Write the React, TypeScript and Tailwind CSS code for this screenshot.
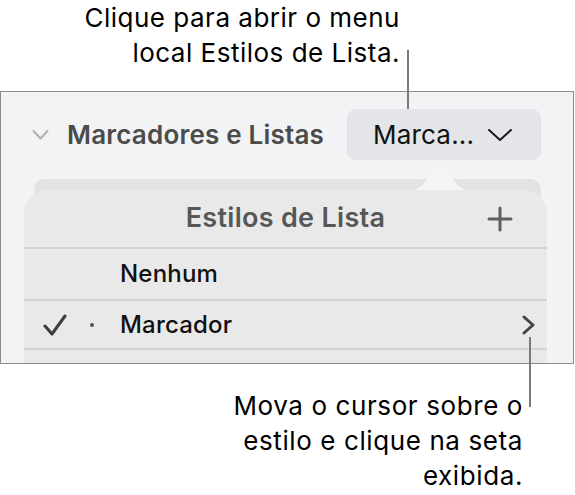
export default function App() {
  return (
    <div className="relative h-[495px] w-[575px] overflow-hidden bg-white font-['Inter',sans-serif] text-black">
      {/* top callout */}
      <div className="h-[91px] pr-[175px] text-right text-[26px] leading-[35px] tracking-[0.5px]">
        <p>Clique para abrir o menu</p>
        <p>local Estilos de Lista.</p>
      </div>

      {/* screenshot frame */}
      <div className="h-[273px] w-[574px] overflow-hidden border border-[#8c8c8c] bg-[#f2f3f5]">
        <div className="flex items-center pt-[17px] pl-[31px]">
          <svg width="17" height="12" viewBox="0 0 17 12" className="shrink-0">
            <polyline points="1.5,2 8.5,9.5 15.5,2" fill="none" stroke="#b0b0b0" strokeWidth="2" strokeLinecap="round" strokeLinejoin="round" />
          </svg>
          <span className="ml-[18px] text-[26px] font-semibold tracking-[0.2px] text-[#4b4b4b]">Marcadores e Listas</span>
          <div className="ml-auto mr-[32px] flex h-[51px] w-[194px] items-center rounded-[9px] bg-[#e4e5e8] pl-[26px]">
            <span className="text-[26px] tracking-[0.2px] text-[#111]">Marca...</span>
            <svg width="26" height="14" viewBox="0 0 26 14" className="ml-[13px] shrink-0">
              <polyline points="2,2 13,12 24,2" fill="none" stroke="#1a1a1a" strokeWidth="2" strokeLinecap="round" strokeLinejoin="round" />
            </svg>
          </div>
        </div>

        {/* popover stack */}
        <div className="relative mt-[19px] ml-[33px] w-[507px] rounded-t-[10px] bg-[#e2e3e5] pt-[11px]">
          <svg width="56" height="24" viewBox="0 0 56 24" className="absolute left-[378px] top-[-13px]">
            <path d="M0,24 C12,24 20,2 28,2 C36,2 44,24 56,24 Z" fill="#f5f5f5" />
          </svg>
          <div className="relative -ml-[10px] w-[523px] rounded-t-[24px] bg-[#e9e9e9]">
            <div className="grid h-[59px] grid-cols-[1fr_auto_1fr] items-center border-b-2 border-[#d3d3d3]">
              <span />
              <span className="text-[27px] font-semibold tracking-[0.3px] text-[#575757]">Estilos de Lista</span>
              <svg width="26" height="26" viewBox="0 0 26 26" className="mr-[34px] justify-self-end">
                <path d="M13,2 V24 M2,13 H24" stroke="#5f5f5f" strokeWidth="3" strokeLinecap="round" />
              </svg>
            </div>
            <div className="flex h-[52px] items-center border-b-2 border-[#d3d3d3] pl-[96px]">
              <span className="text-[24px] font-medium tracking-[0.2px] text-[#111]">Nenhum</span>
            </div>
            <div className="flex h-[49px] items-center border-b-2 border-[#d3d3d3] pl-[19px] pr-[11px]">
              <svg width="24" height="22" viewBox="0 0 24 22" className="shrink-0">
                <polyline points="2,12 9,20 22,2" fill="none" stroke="#3d3d3d" strokeWidth="3" strokeLinecap="round" strokeLinejoin="round" />
              </svg>
              <span className="ml-[23px] h-[4px] w-[4px] rounded-full bg-[#555]" />
              <span className="ml-[26px] text-[24px] font-medium tracking-[0.2px] text-[#111]">Marcador</span>
              <svg width="14" height="20" viewBox="0 0 14 20" className="ml-auto shrink-0">
                <polyline points="2,2 11,10 2,18" fill="none" stroke="#444" strokeWidth="3" strokeLinecap="round" strokeLinejoin="round" />
              </svg>
            </div>
            <div className="h-[40px]" />
          </div>
        </div>
      </div>

      {/* bottom callout */}
      <div className="pt-[24px] pr-[52px] text-right text-[26px] leading-[35px] tracking-[0.6px]">
        <p>Mova o cursor sobre o</p>
        <p>estilo e clique na seta</p>
        <p>exibida.</p>
      </div>

      {/* leader lines */}
      <div className="absolute left-[407px] top-[50px] h-[59px] w-[2px] bg-[#7a7a7a]" />
      <div className="absolute left-[529px] top-[337px] h-[70px] w-[2px] bg-[#7a7a7a]" />
    </div>
  );
}
